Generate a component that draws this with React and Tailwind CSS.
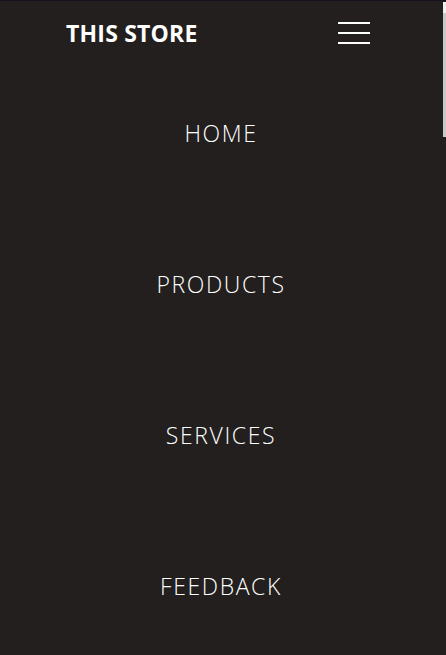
import React from 'react';

const links = ['HOME', 'PRODUCTS', 'SERVICES', 'FEEDBACK'];

const App = () => {
  return (
    <div className="relative min-h-[655px] bg-[#221f1e] border-t border-[#16131f] font-['Open_Sans',sans-serif] text-white overflow-hidden">
      <header className="h-[56px] pt-[8px] pl-[66px] pr-[76px] flex items-center justify-between">
        <a href="#" className="text-[23px] font-bold tracking-[0.2px] leading-none">THIS STORE</a>
        <button className="w-[32px] flex flex-col gap-[8px]" aria-label="menu">
          <span className="block h-[2px] bg-white"></span>
          <span className="block h-[2px] bg-white"></span>
          <span className="block h-[2px] bg-white"></span>
        </button>
      </header>

      <nav className="pt-[1px]">
        <ul className="flex flex-col">
          {links.map((link) => (
            <li key={link} className="h-[151px] flex items-center justify-center pr-[4px]">
              <a href="#" className="text-[23px] font-light tracking-[1.6px] leading-none">{link}</a>
            </li>
          ))}
        </ul>
      </nav>

      <div className="absolute right-0 top-[1px] w-[3px] h-[135px] flex flex-col">
        <div className="h-[11px] bg-[#f0f0f0]"></div>
        <div className="flex-1 bg-[#c9c9c9]"></div>
      </div>
    </div>
  );
};

export default App;
